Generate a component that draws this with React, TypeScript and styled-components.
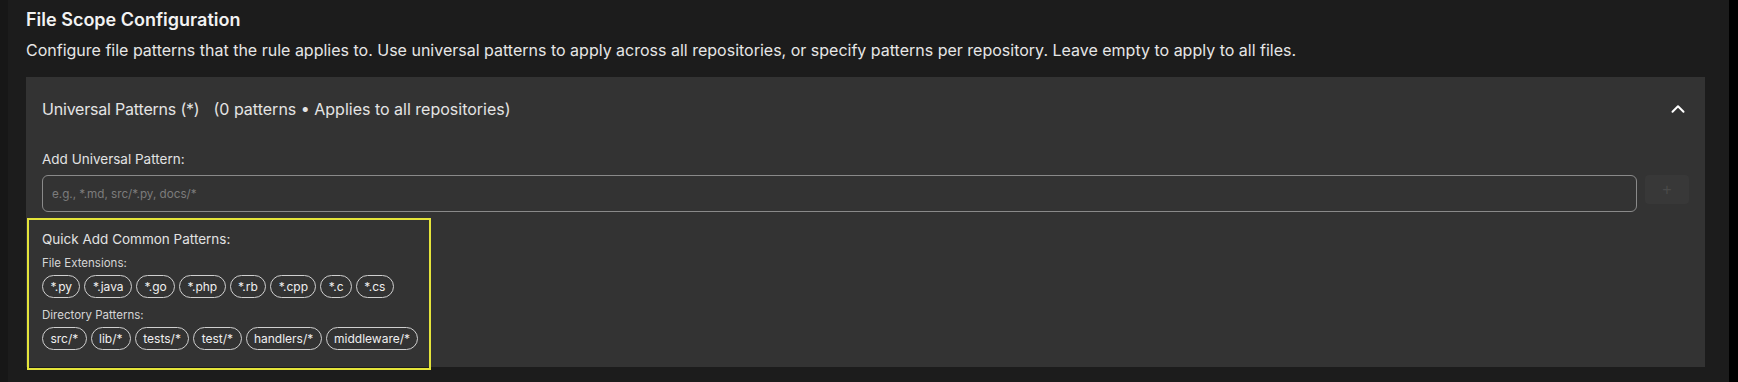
import React from "react";
import styled, { createGlobalStyle } from "styled-components";
import { ChevronUp } from "lucide-react";

const GlobalStyle = createGlobalStyle`
  html, body { margin: 0; padding: 0; background: #1c1c1c; }
  body { width: 1738px; height: 382px; overflow: hidden; }
  * { box-sizing: border-box; }
`;

const Page = styled.div`
  display: flex;
  height: 382px;
`;

const Gutter = styled.div`
  width: 8px;
  background: #171717;
`;

const ScrollTrack = styled.div`
  width: 9px;
  background: #000;
`;

const Main = styled.main`
  flex: 1;
  background: #1c1c1c;
  padding: 6px 24px 0 18px;
  font-family: "Inter", "Noto Sans", sans-serif;
  color: #ececec;
`;

const Title = styled.h2`
  margin: 0;
  font-size: 18px;
  line-height: 27px;
  font-weight: 600;
  color: #f2f2f2;
`;

const Description = styled.p`
  margin: 5px 0 0;
  font-size: 16px;
  line-height: 24px;
  color: #e6e6e6;
`;

const Panel = styled.section`
  margin-top: 15px;
  background: #333333;
  padding-bottom: 17px;
`;

const PanelHeader = styled.div`
  height: 64px;
  padding: 0 16px;
  display: flex;
  align-items: center;
  justify-content: space-between;
  font-size: 16px;
  color: #e4e4e4;
`;

const HeaderTitle = styled.div`
  display: flex;
  gap: 14px;
`;

const HeaderName = styled.span`
  letter-spacing: -0.2px;
`;

const Toggle = styled.button`
  border: 0;
  background: none;
  padding: 0;
  display: flex;
  color: #fff;
`;

const PanelBody = styled.div`
  padding: 0 16px;
  display: flex;
  flex-direction: column;
`;

const FieldLabel = styled.label`
  margin-top: 8px;
  font-size: 13.5px;
  line-height: 20px;
  color: #e2e2e2;
`;

const InputRow = styled.div`
  margin-top: 6px;
  display: flex;
  gap: 8px;
  align-items: flex-start;
`;

const PatternInput = styled.input`
  flex: 1;
  height: 37px;
  border: 1px solid #8a8a8a;
  border-radius: 6px;
  background: transparent;
  padding: 0 9px;
  font-family: "Inter", sans-serif;
  font-size: 11.7px;
  color: #ddd;
  outline: none;
  &::placeholder { color: #7c7c7c; }
`;

const AddButton = styled.button`
  width: 44px;
  height: 29px;
  border: 0;
  border-radius: 4px;
  background: #383838;
  color: #4a4a4a;
  font-size: 16px;
  line-height: 1;
  padding: 0;
`;

const QuickAdd = styled.div`
  position: relative;
  align-self: flex-start;
  margin-top: 17px;
  display: flex;
  flex-direction: column;
  &::after {
    content: "";
    position: absolute;
    inset: -11px -13px -20px -15px;
    border: 2px solid #e4e43a;
    pointer-events: none;
  }
`;

const QuickTitle = styled.div`
  font-size: 13.5px;
  line-height: 20px;
  color: #e2e2e2;
`;

const GroupLabel = styled.div<{ $gap: number }>`
  margin-top: ${(p) => p.$gap}px;
  font-size: 11.5px;
  line-height: 16px;
  color: #d6d6d6;
`;

const ChipRow = styled.div`
  margin-top: 4px;
  display: flex;
  gap: 4px;
`;

const Chip = styled.button`
  height: 23px;
  padding: 0 7.4px;
  border: 1px solid #cfcfcf;
  border-radius: 999px;
  background: transparent;
  color: #efefef;
  font-family: "Inter", sans-serif;
  font-size: 12px;
  line-height: 21px;
`;

const extensions = ["*.py", "*.java", "*.go", "*.php", "*.rb", "*.cpp", "*.c", "*.cs"];
const directories = ["src/*", "lib/*", "tests/*", "test/*", "handlers/*", "middleware/*"];

export default function App() {
  return (
    <>
      <GlobalStyle />
      <Page>
        <Gutter />
        <Main>
          <Title>File Scope Configuration</Title>
          <Description>
            Configure file patterns that the rule applies to. Use universal patterns to apply across all
            repositories, or specify patterns per repository. Leave empty to apply to all files.
          </Description>
          <Panel>
            <PanelHeader>
              <HeaderTitle>
                <HeaderName>Universal Patterns (*)</HeaderName>
                <span>(0 patterns • Applies to all repositories)</span>
              </HeaderTitle>
              <Toggle aria-label="Collapse">
                <ChevronUp size={22} strokeWidth={2.2} />
              </Toggle>
            </PanelHeader>
            <PanelBody>
              <FieldLabel>Add Universal Pattern:</FieldLabel>
              <InputRow>
                <PatternInput placeholder="e.g., *.md, src/*.py, docs/*" />
                <AddButton>+</AddButton>
              </InputRow>
              <QuickAdd>
                <QuickTitle>Quick Add Common Patterns:</QuickTitle>
                <GroupLabel $gap={6}>File Extensions:</GroupLabel>
                <ChipRow>
                  {extensions.map((e) => (
                    <Chip key={e}>{e}</Chip>
                  ))}
                </ChipRow>
                <GroupLabel $gap={9}>Directory Patterns:</GroupLabel>
                <ChipRow>
                  {directories.map((d) => (
                    <Chip key={d}>{d}</Chip>
                  ))}
                </ChipRow>
              </QuickAdd>
            </PanelBody>
          </Panel>
        </Main>
        <ScrollTrack />
      </Page>
    </>
  );
}
